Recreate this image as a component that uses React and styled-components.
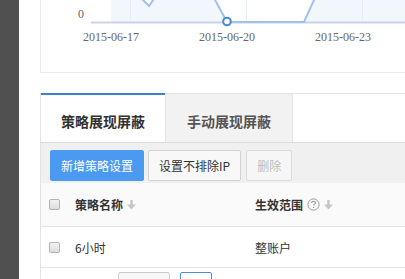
import React from 'react';
import styled, { createGlobalStyle } from 'styled-components';

const GlobalStyle = createGlobalStyle`
  html, body {
    margin: 0;
    padding: 0;
    background: #fff;
    overflow: hidden;
  }
  body {
    font-family: "Noto Sans CJK SC", "Noto Sans", sans-serif;
    font-size: 12px;
    color: #333;
  }
`;

const Page = styled.div`
  display: flex;
  height: 279px;
  overflow: hidden;
`;

const Sidebar = styled.div`
  width: 19px;
  flex: none;
  background: #505050;
`;

const Main = styled.div`
  flex: 1;
  min-width: 0;
  padding-left: 21px;
  overflow: hidden;
`;

const ChartCard = styled.div`
  width: 480px;
  height: 72px;
  border: 1px solid #ebebeb;
  border-top: none;
  background: #fff;
  overflow: hidden;
`;

const Panel = styled.div`
  width: 480px;
  margin-top: 20px;
  border-left: 1px solid #e3e3e3;
`;

const TabBar = styled.div`
  display: flex;
  height: 49px;
  border-bottom: 1px solid #dcdcdc;
`;

const Tab = styled.div`
  display: flex;
  align-items: center;
  justify-content: center;
  box-sizing: border-box;
  padding-top: 5px;
  width: ${p => (p.$active ? '124px' : '128px')};
  background: ${p => (p.$active ? '#fff' : '#f2f2f2')};
  border-top: ${p => (p.$active ? '2px solid #3f7fd0' : '1px solid #e0e0e0')};
  border-left: ${p => (p.$active ? 'none' : '1px solid #e3e3e3')};
  border-right: ${p => (p.$active ? 'none' : '1px solid #e3e3e3')};
  font-size: 14px;
  font-weight: 700;
  color: ${p => (p.$active ? '#333' : '#555')};
`;

const TabFiller = styled.div`
  flex: 1;
  border-top: 1px solid #e3e3e3;
`;

const Toolbar = styled.div`
  display: flex;
  align-items: flex-start;
  gap: 4px;
  height: 40px;
  box-sizing: border-box;
  padding: 7px 0 0 9px;
  background: #f0f0f0;
`;

const Button = styled.button`
  height: 31px;
  padding: 0 10px;
  margin-right: ${p => (p.$gap ? '1px' : '0')};
  border-radius: 2px;
  font-family: inherit;
  font-size: 12px;
  cursor: pointer;
  border: 1px solid ${p => (p.$primary ? '#4a9af2' : '#d2d2d2')};
  background: ${p => (p.$primary ? '#4a9af2' : '#f8f8f8')};
  color: ${p => (p.$primary ? '#fff' : '#333')};
  &:disabled {
    color: #bdbdbd;
    background: #f6f6f6;
    border-color: #dcdcdc;
    cursor: default;
  }
`;

const Row = styled.div`
  display: grid;
  grid-template-columns: 34px 180px 1fr;
  align-items: center;
  height: ${p => (p.$head ? '43px' : '40px')};
  background: ${p => (p.$head ? '#fafafa' : '#fff')};
  border-bottom: 1px solid #e4e4e4;
`;

const Cell = styled.div`
  display: flex;
  align-items: center;
  gap: 4px;
  padding-left: ${p => (p.$check ? '8px' : '0')};
  font-weight: ${p => (p.$head ? 700 : 400)};
  color: #333;
`;

const Check = styled.span`
  display: block;
  width: 9px;
  height: 9px;
  border: 1px solid #b3b3b3;
  border-radius: 2px;
  background: linear-gradient(#f3f3f3, #dcdcdc);
`;

const Pager = styled.div`
  display: flex;
  gap: 10px;
  padding: 4px 0 0 77px;
`;

const PagerBox = styled.div`
  width: ${p => p.$w}px;
  height: 26px;
  box-sizing: border-box;
  border: 1px solid ${p => (p.$focus ? '#4a8fe0' : '#cccccc')};
  border-radius: 2px;
  background: ${p => (p.$focus ? '#fff' : '#f7f7f7')};
`;

const SortArrow = () => (
  <svg width="9" height="10" viewBox="0 0 9 10">
    <rect x="3.3" y="0" width="2.4" height="5" fill="#c6c6c6" />
    <polygon points="0,4.5 9,4.5 4.5,9.5" fill="#c6c6c6" />
  </svg>
);

const HelpIcon = () => (
  <svg width="13" height="13" viewBox="0 0 13 13">
    <circle cx="6.5" cy="6.5" r="5.6" fill="none" stroke="#9a9a9a" strokeWidth="1" />
    <path d="M4.6 5.1 C4.6 3.9 5.5 3.3 6.5 3.3 C7.6 3.3 8.4 4 8.4 4.9 C8.4 6.1 6.6 6.2 6.6 7.6" fill="none" stroke="#9a9a9a" strokeWidth="1.1" />
    <circle cx="6.6" cy="9.4" r="0.7" fill="#9a9a9a" />
  </svg>
);

// chart drawn in page coordinates, shifted by the card's left edge
const linePts = [
  [111, -32], [149, 6], [188, -50], [227, 22], [266, 22], [304, 22], [343, -64], [382, -64], [421, -64],
];

const Chart = () => {
  const line = linePts.map(p => p.join(',')).join(' ');
  const area = `${line} 421,22 111,22`;
  return (
    <svg width="480" height="72" style={{ display: 'block' }}>
      <g transform="translate(-41,0)">
        <clipPath id="plot">
          <rect x="91" y="-10" width="400" height="33" />
        </clipPath>
        <g clipPath="url(#plot)">
          <polygon points={area} fill="#f2f7fe" />
          {[130, 246, 362].map(x => (
            <line key={x} x1={x + 0.5} y1="-10" x2={x + 0.5} y2="22" stroke="#e8edf5" />
          ))}
        </g>
        <line x1="91" y1="22.5" x2="480" y2="22.5" stroke="#c9d4e6" strokeWidth="2" />
        <polyline points={line} fill="none" stroke="#a3bfec" strokeWidth="2" clipPath="url(#plot)" />
        <circle cx="227" cy="21.5" r="3.8" fill="#fff" stroke="#4a86e0" strokeWidth="2" />
        <text x="84" y="18" textAnchor="end" fontFamily="'Liberation Serif', serif" fontSize="12" fill="#666">0</text>
        {[['2015-06-17', 111], ['2015-06-20', 227], ['2015-06-23', 343]].map(([d, x]) => (
          <text key={d} x={x} y="41" textAnchor="middle" fontFamily="'Liberation Serif', serif" fontSize="12" fill="#666">{d}</text>
        ))}
      </g>
    </svg>
  );
};

export default function App() {
  return (
    <>
      <GlobalStyle />
      <Page>
        <Sidebar />
        <Main>
          <ChartCard>
            <Chart />
          </ChartCard>
          <Panel>
            <TabBar>
              <Tab $active>策略展现屏蔽</Tab>
              <Tab>手动展现屏蔽</Tab>
              <TabFiller />
            </TabBar>
            <Toolbar>
              <Button $primary>新增策略设置</Button>
              <Button $gap>设置不排除IP</Button>
              <Button disabled>删除</Button>
            </Toolbar>
            <Row $head>
              <Cell $check><Check /></Cell>
              <Cell $head>策略名称<SortArrow /></Cell>
              <Cell $head>生效范围<HelpIcon /><SortArrow /></Cell>
            </Row>
            <Row>
              <Cell $check><Check /></Cell>
              <Cell>6小时</Cell>
              <Cell>整账户</Cell>
            </Row>
            <Pager>
              <PagerBox $w={52} />
              <PagerBox $w={32} $focus />
            </Pager>
          </Panel>
        </Main>
      </Page>
    </>
  );
}
